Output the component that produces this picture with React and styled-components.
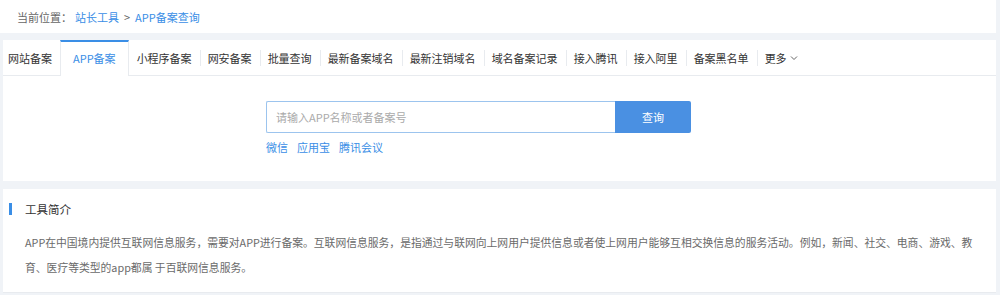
import React from 'react'
import styled, { createGlobalStyle } from 'styled-components'

const GlobalStyle = createGlobalStyle`
  html, body {
    margin: 0;
    padding: 0;
    background: #f0f3f7;
    font-family: 'Noto Sans CJK SC', 'Noto Sans', sans-serif;
    font-size: 11px;
    color: #333;
  }
`;

const Page = styled.div`
  width: 1000px;
  height: 295px;
  overflow: hidden;
`;

const Breadcrumb = styled.div`
  height: 33px;
  background: #fff;
  margin-right: 4px;
  display: flex;
  align-items: center;
  padding-left: 17px;
  color: #666;
`;

const Crumb = styled.a`
  color: #3a8ee6;
  text-decoration: none;
  margin-left: ${p => p.gap || 0}px;
`;

const Arrow = styled.span`
  margin: 0 5px;
`;

const Panel = styled.div`
  background: #fff;
  margin: ${p => p.top || 0}px 4px 0 3px;
`;

const Tabs = styled.div`
  display: flex;
  align-items: stretch;
  height: 35px;
  border-bottom: 1px solid #e8ebef;
`;

const Tab = styled.div`
  position: relative;
  display: flex;
  align-items: center;
  padding: 0 ${p => (p.active ? 12 : 8)}px;
  color: ${p => (p.active ? '#3a8ee6' : '#333')};
  white-space: nowrap;
  &:first-child {
    padding-left: 5px;
  }
  ${p => p.active && `
    border-top: 2px solid #3a8ee6;
    border-left: 1px solid #e8ebef;
    border-right: 1px solid #e8ebef;
    margin-bottom: -1px;
    background: #fff;
    padding-bottom: 2px;
  `}
  ${p => p.sep && `
    &::before {
      content: '';
      position: absolute;
      left: 0;
      top: 10px;
      height: 16px;
      border-left: 1px solid #e8ebef;
    }
  `}
`;

const Chevron = styled.svg`
  margin-left: 3px;
`;

const SearchArea = styled.div`
  height: 105px;
  padding: 25px 0 0 263px;
  box-sizing: border-box;
`;

const SearchRow = styled.div`
  display: flex;
  height: 32px;
`;

const Input = styled.input`
  width: 349px;
  height: 32px;
  box-sizing: border-box;
  border: 1px solid #9cc4ee;
  border-right: none;
  border-radius: 2px 0 0 2px;
  padding: 0 9px;
  font-family: inherit;
  font-size: 11px;
  outline: none;
  &::placeholder {
    color: #aaa;
  }
`;

const Button = styled.button`
  width: 76px;
  height: 32px;
  border: none;
  background: #4a90e2;
  color: #fff;
  border-radius: 0 2px 2px 0;
  font-family: inherit;
  font-size: 11px;
`;

const Links = styled.div`
  display: flex;
  gap: 9px;
  margin-top: 6px;
`;

const QuickLink = styled.a`
  color: #3a8ee6;
  text-decoration: none;
`;

const Intro = styled.div`
  height: 104px;
  border-bottom: 1px solid #e8ebef;
  padding: 12px 20px 0 6px;
  box-sizing: border-box;
`;

const Title = styled.div`
  display: flex;
  align-items: center;
  gap: 13px;
  color: #333;
  font-size: 11.5px;
  &::before {
    content: '';
    width: 3px;
    height: 12px;
    background: #3a8ee6;
  }
`;

const Text = styled.p`
  margin: 13px 0 0 16px;
  line-height: 25px;
  color: #6a6a6a;
  font-size: 10.8px;
`;

const tabs = ['网站备案', 'APP备案', '小程序备案', '网安备案', '批量查询', '最新备案域名', '最新注销域名', '域名备案记录', '接入腾讯', '接入阿里', '备案黑名单'];

function App() {
  return (
    <Page>
      <GlobalStyle />
      <Breadcrumb>
        当前位置：
        <Crumb href="#" gap={3}>站长工具</Crumb>
        <Arrow>&gt;</Arrow>
        <Crumb href="#">APP备案查询</Crumb>
      </Breadcrumb>
      <Panel top={7}>
        <Tabs>
          {tabs.map((t, i) => (
            <Tab key={t} active={i === 1} sep={i > 2}>{t}</Tab>
          ))}
          <Tab sep>
            更多
            <Chevron width="8" height="6" viewBox="0 0 8 6">
              <path d="M1 1.5 L4 4.5 L7 1.5" fill="none" stroke="#666" strokeWidth="1" />
            </Chevron>
          </Tab>
        </Tabs>
        <SearchArea>
          <SearchRow>
            <Input placeholder="请输入APP名称或者备案号" />
            <Button>查询</Button>
          </SearchRow>
          <Links>
            <QuickLink href="#">微信</QuickLink>
            <QuickLink href="#">应用宝</QuickLink>
            <QuickLink href="#">腾讯会议</QuickLink>
          </Links>
        </SearchArea>
      </Panel>
      <Panel top={8}>
        <Intro>
          <Title>工具简介</Title>
          <Text>
            APP在中国境内提供互联网信息服务，需要对APP进行备案。互联网信息服务，是指通过与联网向上网用户提供信息或者使上网用户能够互相交换信息的服务活动。例如，新闻、社交、电商、游戏、教育、医疗等类型的app都属 于百联网信息服务。
          </Text>
        </Intro>
      </Panel>
    </Page>
  )
}

export default App;
